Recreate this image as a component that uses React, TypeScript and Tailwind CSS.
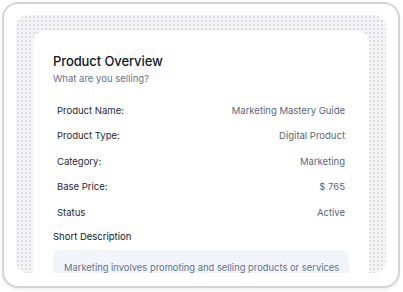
import React from "react";

const rows: [string, string][] = [
  ["Product Name:", "Marketing Mastery Guide"],
  ["Product Type:", "Digital Product"],
  ["Category:", "Marketing"],
  ["Base Price:", "$ 765"],
  ["Status", "Active"],
];

export default function App() {
  return (
    <div className="w-[403px] h-[292px] bg-white p-[2px] font-['Inter',sans-serif]">
      <div className="h-[286px] w-[398px] rounded-[16px] border-2 border-[#d4d4d8] bg-white px-[12px] pt-[11px] shadow-[0_2px_3px_rgba(0,0,0,0.06)]">
        <div className="h-[258px] overflow-hidden rounded-[12px] bg-[#f4f4f5] bg-[radial-gradient(circle,#dcdce0_0.7px,transparent_1px)] bg-[length:4px_4px] px-[17px] pt-[16px]">
          <div className="h-[300px] rounded-[12px] bg-white px-[20px] pt-[22px]">
            <div className="text-[13px] font-medium leading-[17px] text-[#0f172a] tracking-[-0.1px]">Product Overview</div>
            <div className="mt-[2px] text-[9.5px] leading-[13px] text-[#64748b]">What are you selling?</div>
            <div className="mt-[13px] flex flex-col">
              {rows.map(([k, v]) => (
                <div key={k} className="flex h-[25.6px] items-center justify-between px-[4px] text-[9.5px]">
                  <span className="text-[#1e293b]">{k}</span>
                  <span className="text-[#5b6579]">{v}</span>
                </div>
              ))}
            </div>
            <div className="mt-[4px] text-[9.5px] leading-[14px] text-[#0f172a]">Short Description</div>
            <div className="mt-[6px] whitespace-nowrap rounded-[8px] bg-[#f1f5f9] px-[11px] pt-[11px] pb-[12px] text-[9.4px] text-[#64748b]">
              Marketing involves promoting and selling products or services
            </div>
          </div>
        </div>
      </div>
    </div>
  );
}
